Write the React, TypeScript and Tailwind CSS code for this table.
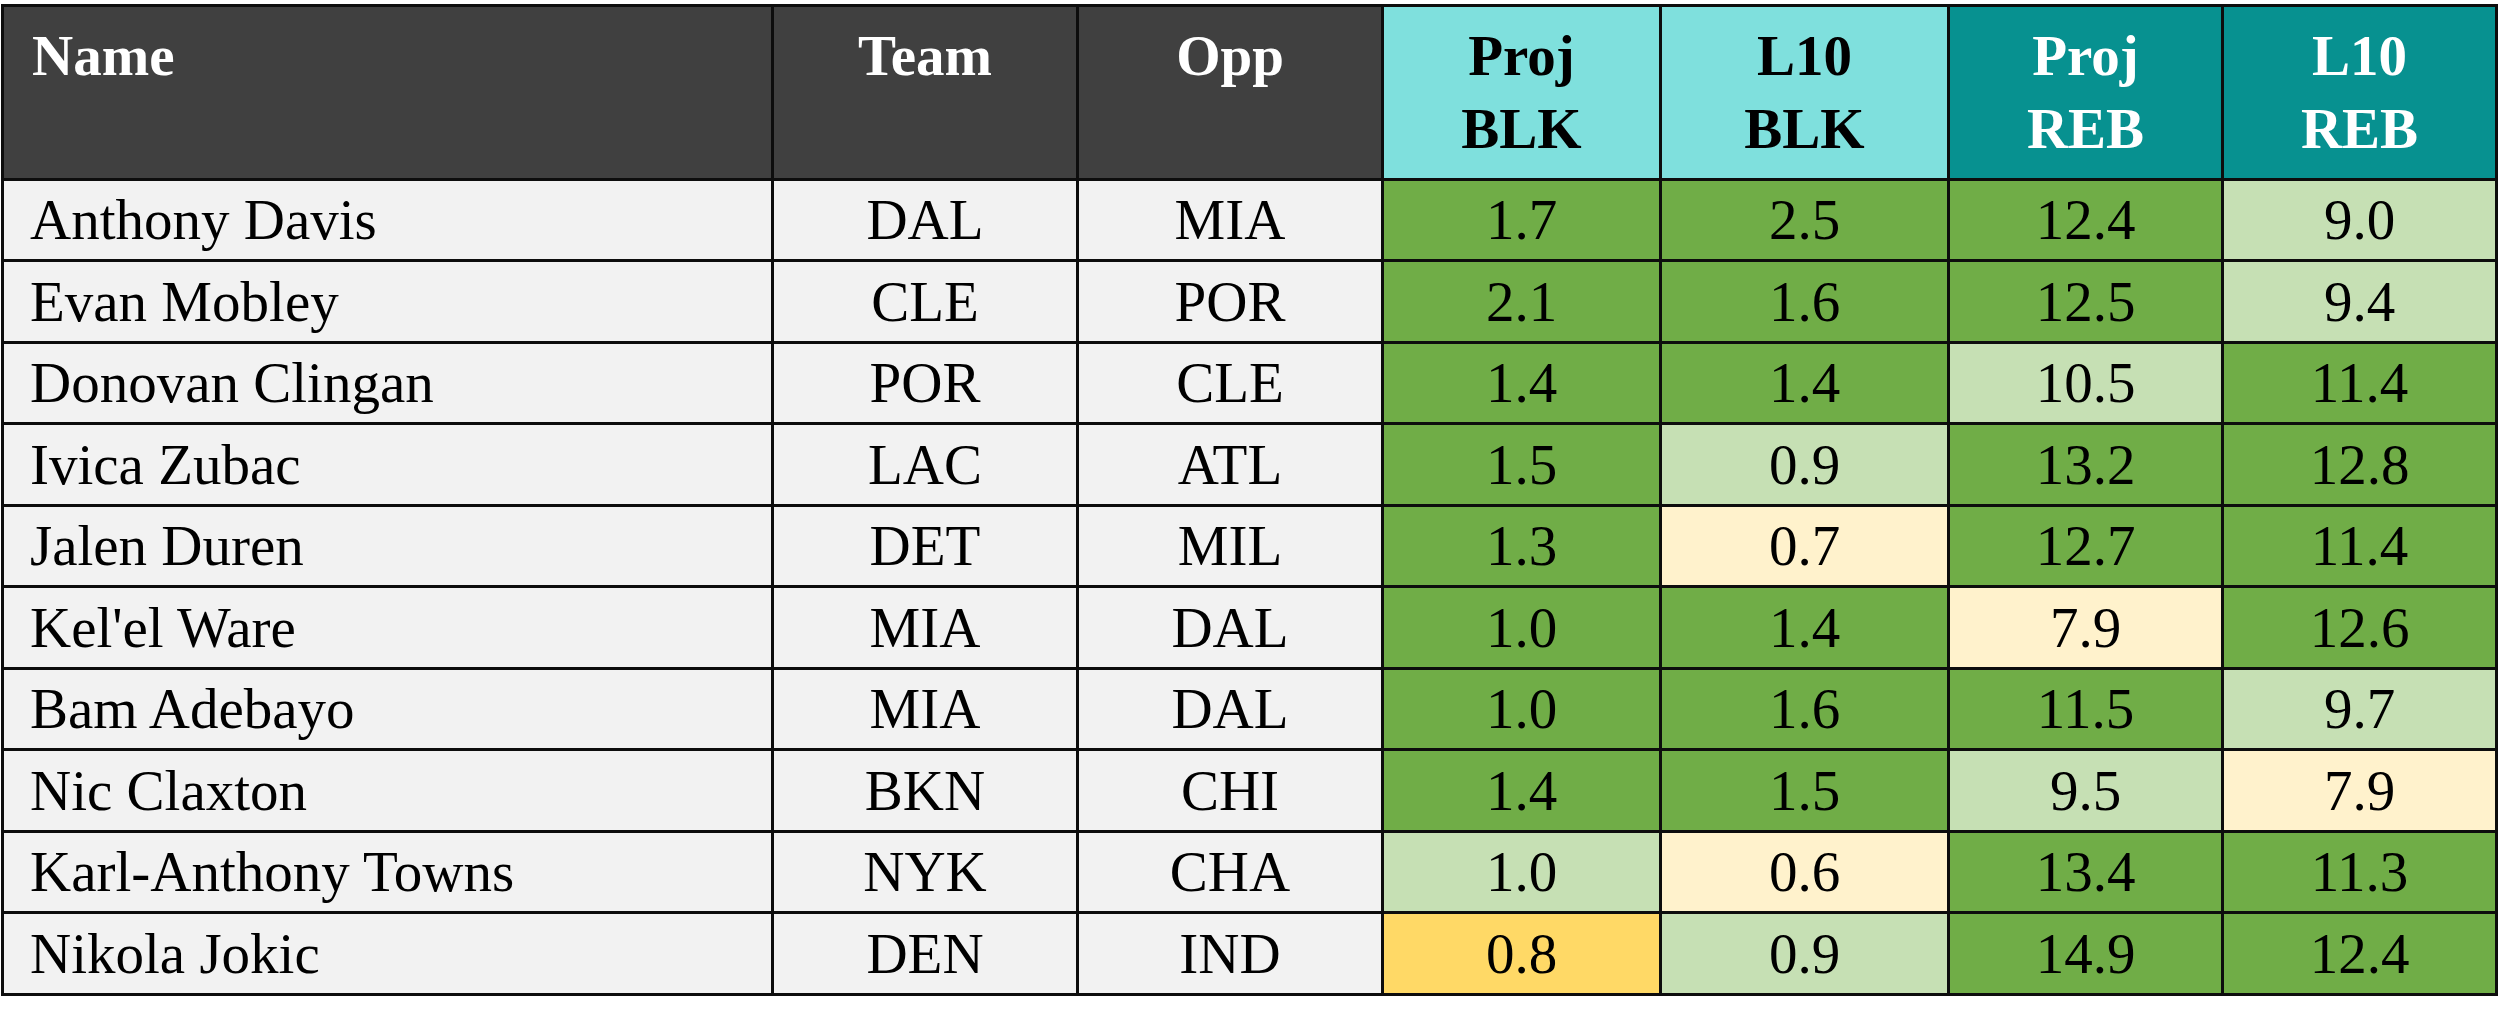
import React from "react";

type Shade = "G" | "L" | "Y" | "O";

interface Row {
  name: string;
  team: string;
  opp: string;
  stats: [string, Shade][];
}

const shadeClass: Record<Shade, string> = {
  G: "bg-[#70ad47]",
  L: "bg-[#c6e0b4]",
  Y: "bg-[#fff2cc]",
  O: "bg-[#ffd966]",
};

const rows: Row[] = [
  { name: "Anthony Davis", team: "DAL", opp: "MIA", stats: [["1.7", "G"], ["2.5", "G"], ["12.4", "G"], ["9.0", "L"]] },
  { name: "Evan Mobley", team: "CLE", opp: "POR", stats: [["2.1", "G"], ["1.6", "G"], ["12.5", "G"], ["9.4", "L"]] },
  { name: "Donovan Clingan", team: "POR", opp: "CLE", stats: [["1.4", "G"], ["1.4", "G"], ["10.5", "L"], ["11.4", "G"]] },
  { name: "Ivica Zubac", team: "LAC", opp: "ATL", stats: [["1.5", "G"], ["0.9", "L"], ["13.2", "G"], ["12.8", "G"]] },
  { name: "Jalen Duren", team: "DET", opp: "MIL", stats: [["1.3", "G"], ["0.7", "Y"], ["12.7", "G"], ["11.4", "G"]] },
  { name: "Kel'el Ware", team: "MIA", opp: "DAL", stats: [["1.0", "G"], ["1.4", "G"], ["7.9", "Y"], ["12.6", "G"]] },
  { name: "Bam Adebayo", team: "MIA", opp: "DAL", stats: [["1.0", "G"], ["1.6", "G"], ["11.5", "G"], ["9.7", "L"]] },
  { name: "Nic Claxton", team: "BKN", opp: "CHI", stats: [["1.4", "G"], ["1.5", "G"], ["9.5", "L"], ["7.9", "Y"]] },
  { name: "Karl-Anthony Towns", team: "NYK", opp: "CHA", stats: [["1.0", "L"], ["0.6", "Y"], ["13.4", "G"], ["11.3", "G"]] },
  { name: "Nikola Jokic", team: "DEN", opp: "IND", stats: [["0.8", "O"], ["0.9", "L"], ["14.9", "G"], ["12.4", "G"]] },
];

const headers = [
  { label: ["Proj", "BLK"], cls: "bg-[#7fe0dd] text-black" },
  { label: ["L10", "BLK"], cls: "bg-[#7fe0dd] text-black" },
  { label: ["Proj", "REB"], cls: "bg-[#079190] text-white" },
  { label: ["L10", "REB"], cls: "bg-[#079190] text-white" },
];

const App: React.FC = () => {
  return (
    <div className="w-[2500px] h-[1030px] bg-white pt-[4px] pl-[1px] font-['Liberation_Serif',serif] text-[57px] leading-[73px]">
      <div className="inline-grid grid-cols-[767px_302px_302px_275px_285px_271px_271px] grid-rows-[170.5px_repeat(10,78.5px)] gap-[3px] p-[3px] bg-[#0d0d0d]">
        {/* header */}
        <div className="bg-[#404040] text-white font-bold pl-[28px] pt-[12px]">Name</div>
        <div className="bg-[#404040] text-white font-bold text-center pt-[12px]">Team</div>
        <div className="bg-[#404040] text-white font-bold text-center pt-[12px]">Opp</div>
        {headers.map((h) => (
          <div key={h.label.join(" ")} className={`font-bold text-center pt-[12px] ${h.cls}`}>
            <div>{h.label[0]}</div>
            <div>{h.label[1]}</div>
          </div>
        ))}

        {rows.map((r) => (
          <React.Fragment key={r.name}>
            <div className="bg-[#f2f2f2] flex items-center pl-[26px]">{r.name}</div>
            <div className="bg-[#f2f2f2] flex items-center justify-center">{r.team}</div>
            <div className="bg-[#f2f2f2] flex items-center justify-center">{r.opp}</div>
            {r.stats.map(([v, s], i) => (
              <div key={i} className={`flex items-center justify-center ${shadeClass[s]}`}>
                {v}
              </div>
            ))}
          </React.Fragment>
        ))}
      </div>
    </div>
  );
};

export default App;
